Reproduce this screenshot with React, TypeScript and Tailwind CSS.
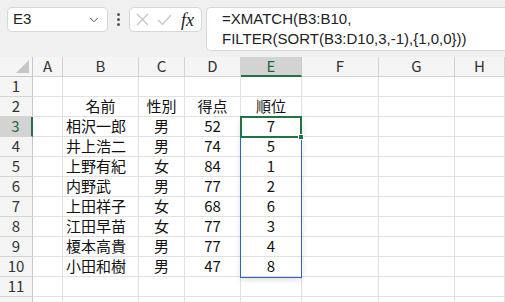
import { ChevronDown } from "lucide-react";

const COLS = ["A", "B", "C", "D", "E", "F", "G", "H"];

type Row = { name: string; sex: string; score: string; rank: string };

const DATA: Row[] = [
  { name: "相沢一郎", sex: "男", score: "52", rank: "7" },
  { name: "井上浩二", sex: "男", score: "74", rank: "5" },
  { name: "上野有紀", sex: "女", score: "84", rank: "1" },
  { name: "内野武", sex: "男", score: "77", rank: "2" },
  { name: "上田祥子", sex: "女", score: "68", rank: "6" },
  { name: "江田早苗", sex: "女", score: "77", rank: "3" },
  { name: "榎本高貴", sex: "男", score: "77", rank: "4" },
  { name: "小田和樹", sex: "男", score: "47", rank: "8" },
];

const cell = "border-r border-b border-[#e1e1e1] bg-white h-5 flex items-center";

function RowHead({ n, label = true }: { n: number; label?: boolean }) {
  const active = n === 3;
  return (
    <div
      className={[
        "h-5 flex items-center justify-center border-b border-[#d4d4d4]",
        active
          ? "bg-[#d3d3d3] text-[#1e6b3c] border-r-2 border-r-[#217346]"
          : "bg-[#f5f5f5] text-[#333] border-r border-r-[#c8c8c8]",
      ].join(" ")}
    >
      {label ? n : null}
    </div>
  );
}

function CellRow({
  n,
  b,
  c,
  d,
  e,
  bHead,
  label,
}: {
  n: number;
  b?: string;
  c?: string;
  d?: string;
  e?: string;
  bHead?: boolean;
  label?: boolean;
}) {
  return (
    <>
      <RowHead n={n} label={label} />
      <div className={cell} />
      <div className={[cell, bHead ? "justify-center" : "pl-[3px]"].join(" ")}>{b}</div>
      <div className={[cell, "justify-center"].join(" ")}>{c}</div>
      <div className={[cell, "justify-center"].join(" ")}>{d}</div>
      <div className={[cell, "justify-center"].join(" ")}>{e}</div>
      <div className={cell} />
      <div className={cell} />
      <div className={cell} />
    </>
  );
}

export default function App() {
  return (
    <div className="w-[505px] h-[302px] overflow-hidden bg-[#f0f0f0] font-['Noto_Sans_CJK_JP',sans-serif] text-[15px] text-[#111]">
      {/* formula bar */}
      <div className="h-[57px] flex items-start pt-[7px] pl-[7px]">
        <div className="w-[101px] h-[25px] rounded-[5px] border border-[#d6d6d6] bg-white flex items-center justify-between pl-[5px] pr-[6px] font-['Liberation_Sans',sans-serif] text-[15px] text-[#222]">
          <span>E3</span>
          <ChevronDown size={14} strokeWidth={1.6} className="text-[#444]" />
        </div>
        <div className="w-[21px] h-[25px] flex flex-col items-center justify-center gap-[2px]">
          <span className="w-[3px] h-[3px] bg-[#555] rounded-full" />
          <span className="w-[3px] h-[3px] bg-[#555] rounded-full" />
          <span className="w-[3px] h-[3px] bg-[#555] rounded-full" />
        </div>
        <div className="w-[73px] h-[25px] rounded-[5px] border border-[#d6d6d6] bg-white flex items-center pl-[6px] gap-[8px]">
          <svg width="13" height="13" viewBox="0 0 13 13" fill="none" stroke="#c4c4c4" strokeWidth="1.2">
            <path d="M1 1L12 12M12 1L1 12" />
          </svg>
          <svg width="15" height="12" viewBox="0 0 15 12" fill="none" stroke="#c4c4c4" strokeWidth="1.2">
            <path d="M1 6L5.5 10.5L14 1" />
          </svg>
          <span className="ml-[1px] font-['Liberation_Serif',serif] italic text-[18px] leading-none text-[#222]">
            fx
          </span>
        </div>
        <div className="ml-[4px] flex-1 h-[44px] rounded-l-[5px] border border-r-0 border-[#d6d6d6] bg-white pl-[15px] pt-[1px] font-['Liberation_Sans',sans-serif] text-[15px] leading-5 text-[#222]">
          <div>=XMATCH(B3:B10,</div>
          <div>FILTER(SORT(B3:D10,3,-1),{"{"}1,0,0{"}"}))</div>
        </div>
      </div>

      {/* sheet */}
      <div className="relative">
        <div className="grid grid-cols-[33px_30px_76px_46px_56px_61px_77px_76px_1fr]">
          {/* column headers */}
          <div className="h-5 relative bg-[#f5f5f5] border-r border-b border-[#c8c8c8]">
            <span className="absolute right-[3px] bottom-[3px] w-0 h-0 border-l-[13px] border-l-transparent border-b-[13px] border-b-[#c6c6c6]" />
          </div>
          {COLS.map((c) =>
            c === "E" ? (
              <div
                key={c}
                className="h-5 flex items-center justify-center bg-[#d3d3d3] text-[#1e6b3c] border-r border-r-[#c8c8c8] border-b-2 border-b-[#217346]"
              >
                {c}
              </div>
            ) : (
              <div
                key={c}
                className="h-5 flex items-center justify-center bg-[#f5f5f5] text-[#333] border-r border-b border-[#d4d4d4]"
              >
                {c}
              </div>
            )
          )}

          <CellRow n={1} />
          <CellRow n={2} b="名前" c="性別" d="得点" e="順位" bHead />
          {DATA.map((r, i) => (
            <CellRow key={r.name} n={i + 3} b={r.name} c={r.sex} d={r.score} e={r.rank} />
          ))}
          <CellRow n={11} />
          <CellRow n={12} label={false} />
        </div>

        {/* selection range E3:E10 */}
        <div className="absolute left-[240px] top-[60px] w-[62px] h-[161px] border border-[#2b63c4] shadow-[0_2px_6px_rgba(0,0,0,0.12)] pointer-events-none" />
        {/* active cell */}
        <div className="absolute left-[240px] top-[59px] w-[62px] h-[22px] border-2 border-[#217346] pointer-events-none" />
        <div className="absolute left-[298px] top-[77px] w-[6px] h-[6px] bg-[#217346] border border-white pointer-events-none" />
      </div>
    </div>
  );
}
